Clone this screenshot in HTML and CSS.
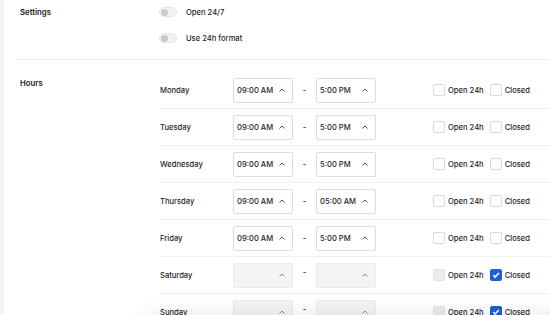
FILE: index.html
```html
<!DOCTYPE html>
<html>
<head>
<meta charset="utf-8" />
<title>Opening hours</title>
<link rel="stylesheet" href="styles.css">
</head>
<body>
<div class="page">
	<div class="rail"></div>
	<div class="main">
		<div class="section settings">
			<div class="label">Settings</div>
			<div class="fields">
				<div class="toggle-row"><span class="toggle"><span class="knob"></span></span>Open 24/7</div>
				<div class="toggle-row"><span class="toggle"><span class="knob"></span></span>Use 24h format</div>
			</div>
		</div>
		<div class="section hours">
			<div class="label">Hours</div>
			<div class="days">
				<div class="day">
					<div class="name">Monday</div>
					<div class="time">09:00 AM<svg viewBox="0 0 6 4"><polyline points="0.5,3.5 3,1 5.5,3.5"/></svg></div>
					<div class="dash">-</div>
					<div class="time">5:00 PM<svg viewBox="0 0 6 4"><polyline points="0.5,3.5 3,1 5.5,3.5"/></svg></div>
					<div class="checks"><span class="box"></span>Open 24h<span class="box"></span>Closed</div>
				</div>
				<div class="day">
					<div class="name">Tuesday</div>
					<div class="time">09:00 AM<svg viewBox="0 0 6 4"><polyline points="0.5,3.5 3,1 5.5,3.5"/></svg></div>
					<div class="dash">-</div>
					<div class="time">5:00 PM<svg viewBox="0 0 6 4"><polyline points="0.5,3.5 3,1 5.5,3.5"/></svg></div>
					<div class="checks"><span class="box"></span>Open 24h<span class="box"></span>Closed</div>
				</div>
				<div class="day">
					<div class="name">Wednesday</div>
					<div class="time">09:00 AM<svg viewBox="0 0 6 4"><polyline points="0.5,3.5 3,1 5.5,3.5"/></svg></div>
					<div class="dash">-</div>
					<div class="time">5:00 PM<svg viewBox="0 0 6 4"><polyline points="0.5,3.5 3,1 5.5,3.5"/></svg></div>
					<div class="checks"><span class="box"></span>Open 24h<span class="box"></span>Closed</div>
				</div>
				<div class="day">
					<div class="name">Thursday</div>
					<div class="time">09:00 AM<svg viewBox="0 0 6 4"><polyline points="0.5,3.5 3,1 5.5,3.5"/></svg></div>
					<div class="dash">-</div>
					<div class="time">05:00 AM<svg viewBox="0 0 6 4"><polyline points="0.5,3.5 3,1 5.5,3.5"/></svg></div>
					<div class="checks"><span class="box"></span>Open 24h<span class="box"></span>Closed</div>
				</div>
				<div class="day">
					<div class="name">Friday</div>
					<div class="time">09:00 AM<svg viewBox="0 0 6 4"><polyline points="0.5,3.5 3,1 5.5,3.5"/></svg></div>
					<div class="dash">-</div>
					<div class="time">5:00 PM<svg viewBox="0 0 6 4"><polyline points="0.5,3.5 3,1 5.5,3.5"/></svg></div>
					<div class="checks"><span class="box"></span>Open 24h<span class="box"></span>Closed</div>
				</div>
				<div class="day off">
					<div class="name">Saturday</div>
					<div class="time"><svg viewBox="0 0 6 4"><polyline points="0.5,3.5 3,1 5.5,3.5"/></svg></div>
					<div class="dash">-</div>
					<div class="time"><svg viewBox="0 0 6 4"><polyline points="0.5,3.5 3,1 5.5,3.5"/></svg></div>
					<div class="checks"><span class="box"></span>Open 24h<span class="box on"><svg viewBox="0 0 10 10"><polyline points="2.3,5.2 4.2,7 7.8,3"/></svg></span>Closed</div>
				</div>
				<div class="day off">
					<div class="name">Sunday</div>
					<div class="time"><svg viewBox="0 0 6 4"><polyline points="0.5,3.5 3,1 5.5,3.5"/></svg></div>
					<div class="dash">-</div>
					<div class="time"><svg viewBox="0 0 6 4"><polyline points="0.5,3.5 3,1 5.5,3.5"/></svg></div>
					<div class="checks"><span class="box"></span>Open 24h<span class="box on"><svg viewBox="0 0 10 10"><polyline points="2.3,5.2 4.2,7 7.8,3"/></svg></span>Closed</div>
				</div>
			</div>
		</div>
	</div>
	<div class="footer-shadow"></div>
</div>
</body>
</html>
```

FILE: styles.css
```css
*{
	box-sizing: border-box;
}

body{
	margin: 0;
	background: #ffffff;
	font-family: Inter, "Noto Sans", sans-serif;
	font-size: 7.6px;
	font-weight: 500;
	color: #1e1e2b;
	overflow: hidden;
}

.page{
	display: flex;
	height: 315px;
	position: relative;
	overflow: hidden;
}

.rail{
	width: 4px;
	flex: none;
	background: #f2f2f4;
}

.main{
	flex: 1;
	padding-left: 11px;
}

.section{
	display: flex;
	border-bottom: 1px solid #f0f0f1;
}

.label{
	width: 144px;
	flex: none;
	padding-left: 5px;
	font-weight: 600;
	font-size: 7.8px;
	color: #1a1a24;
}

.settings{
	padding: 3px 0 12px;
}

.settings .label{
	line-height: 18px;
}

.fields{
	display: flex;
	flex-direction: column;
	gap: 8px;
}

.toggle-row{
	display: flex;
	align-items: center;
	height: 18px;
	gap: 9px;
}

.toggle{
	width: 18px;
	height: 10px;
	border-radius: 5px;
	background: #f3f3f5;
	border: 1px solid #e6e6e9;
	display: flex;
	align-items: center;
	padding-left: 1px;
}

.knob{
	width: 7px;
	height: 7px;
	border-radius: 50%;
	background: #c9c9cf;
}

.hours{
	padding-top: 12px;
	border-bottom: none;
}

.hours .label{
	padding-top: 6px;
	line-height: 11px;
}

.days{
	flex: 1;
	padding-left: 1px;
}

.day{
	display: flex;
	align-items: center;
	height: 37px;
	border-bottom: 1px solid #f0f0f1;
}

.name{
	width: 73px;
	padding-top: 1px;
}

.time{
	width: 60px;
	height: 25px;
	border: 1px solid #dcdce0;
	border-radius: 2px;
	display: flex;
	align-items: center;
	padding: 0 7px 0 3px;
}

.time svg{
	width: 6px;
	height: 4px;
	margin-left: auto;
	fill: none;
	stroke: #50505a;
	stroke-width: 1;
}

.dash{
	width: 23px;
	text-align: center;
}

.checks{
	display: flex;
	align-items: center;
	margin-left: 57px;
}

.box{
	width: 12px;
	height: 12px;
	border: 1px solid #d8d8dd;
	border-radius: 2px;
	margin-right: 3px;
	display: flex;
	align-items: center;
	justify-content: center;
}

.checks .box:nth-of-type(2){
	margin-left: 6px;
}

.off .time{
	background: #f4f4f5;
	border-color: #ebebed;
}

.off .time svg{
	stroke: #8a8a92;
}

.off .dash{
	margin-top: -6px;
}

.off .box{
	background: #ececee;
	border-color: #e2e2e5;
}

.off .box.on{
	background: #1d5fd8;
	border-color: #1d5fd8;
}

.box.on svg{
	width: 10px;
	height: 10px;
	fill: none;
	stroke: #ffffff;
	stroke-width: 1.6;
}

.footer-shadow{
	position: absolute;
	left: 150px;
	top: 322px;
	width: 420px;
	height: 60px;
	background: #ffffff;
	box-shadow: 0 -4px 28px rgba(0, 0, 0, 0.12);
}
```
